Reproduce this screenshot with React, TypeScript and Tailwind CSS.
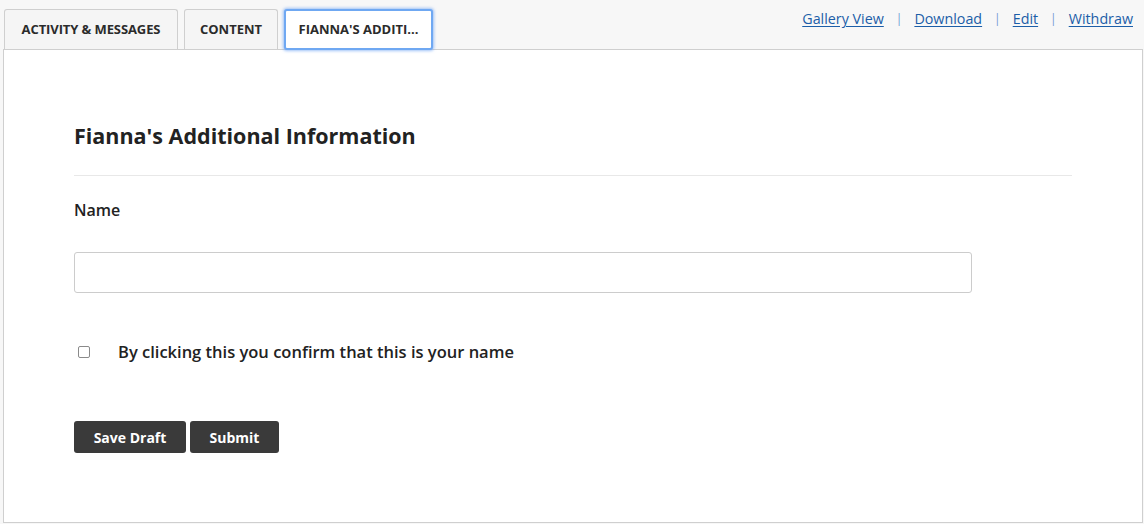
import React from "react";

export default function App() {
  const font = { fontFamily: "'Open Sans', Lato, 'Liberation Sans', sans-serif" };
  return (
    <div className="w-[1144px] h-[524px] bg-[#f7f7f7] overflow-hidden text-[#2b2b2b]" style={font}>
      <div className="flex items-end justify-between h-[49px] pl-[4px] pr-[11px]">
        <div className="flex items-end gap-[6px]">
          <div className="h-[40px] w-[174px] flex items-center justify-center border border-b-0 border-[#cfcfcf] rounded-t-[3px] bg-[#f5f5f5] text-[13px] font-bold tracking-[-0.1px]">
            ACTIVITY &amp; MESSAGES
          </div>
          <div className="h-[40px] w-[94px] flex items-center justify-center border border-b-0 border-[#cfcfcf] rounded-t-[3px] bg-[#f5f5f5] text-[13px] font-bold">
            CONTENT
          </div>
          <div className="relative z-10 -mb-[1px] h-[41px] w-[149px] flex items-center justify-center bg-white rounded-[3px] border-2 border-[#6fa8f2] shadow-[0_0_3px_1px_rgba(120,170,245,0.7)] text-[13px] font-bold">
            FIANNA'S ADDITI...
          </div>
        </div>
        <div className="flex items-center gap-[12px] self-start mt-[8px] text-[14.3px] text-[#1c5ea8]">
          <a className="underline underline-offset-2">Gallery View</a>
          <span className="text-[#6f9bd3] text-[12px]">|</span>
          <a className="underline underline-offset-2">Download</a>
          <span className="text-[#6f9bd3] text-[12px]">|</span>
          <a className="underline underline-offset-2">Edit</a>
          <span className="text-[#6f9bd3] text-[12px]">|</span>
          <a className="underline underline-offset-2">Withdraw</a>
        </div>
      </div>
      <div className="ml-[3px] w-[1140px] h-[474px] border border-[#cfcfcf] bg-white pl-[70px] pt-[71px]">
        <div className="w-[998px]">
          <h1 className="text-[21.5px] font-bold leading-[30px] text-[#222]">Fianna's Additional Information</h1>
          <div className="mt-[24px] border-t border-[#e8e8e8]" />
          <div className="mt-[24px] text-[16px] font-semibold leading-[20px] text-[#222]">Name</div>
          <input
            type="text"
            className="mt-[32px] block w-[898px] h-[41px] border border-[#cccccc] rounded-[3px] bg-white outline-none px-3"
          />
          <label className="mt-[48px] flex items-center h-[22px] text-[16.5px] font-semibold text-[#222]">
            <span className="ml-[4px] w-[12px] h-[12px] border border-[#8a8a8a] rounded-[2px] bg-white" />
            <span className="ml-[28px]">By clicking this you confirm that this is your name</span>
          </label>
          <div className="mt-[58px] flex gap-[4px]">
            <button className="h-[32px] w-[112px] rounded-[3px] bg-[#3a3a3a] text-white text-[14px] font-bold">Save Draft</button>
            <button className="h-[32px] w-[89px] rounded-[3px] bg-[#3a3a3a] text-white text-[14px] font-bold">Submit</button>
          </div>
        </div>
      </div>
    </div>
  );
}
